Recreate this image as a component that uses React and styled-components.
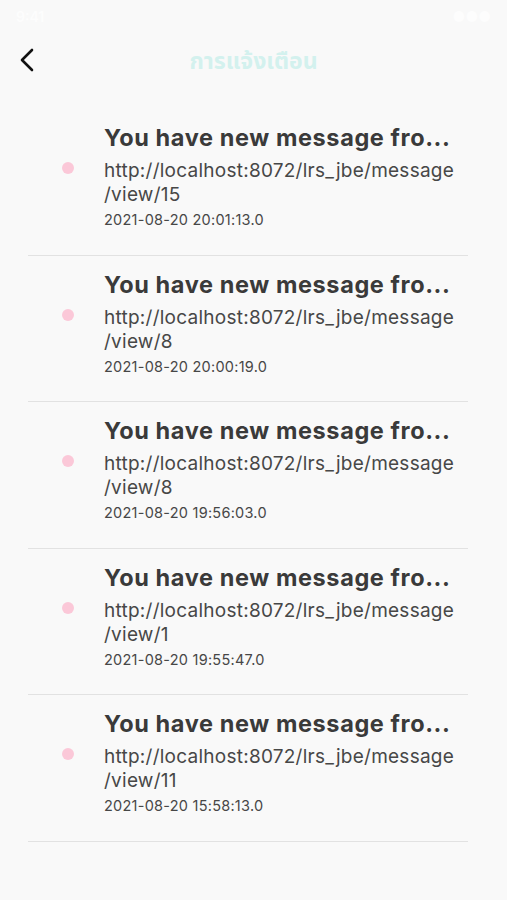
import React from "react";
import styled, { createGlobalStyle } from "styled-components";

const Global = createGlobalStyle`
  html, body { margin: 0; padding: 0; background: #f9f9f9; }
  body { font-family: Inter, "Liberation Sans", Arial, sans-serif; }
`;

const Screen = styled.div`
  width: 507px;
  min-height: 900px;
  background: #f9f9f9;
  display: flex;
  flex-direction: column;
`;

const StatusBar = styled.div`
  height: 44px;
  display: flex;
  align-items: center;
  justify-content: space-between;
  padding: 0 16px 12px;
  box-sizing: border-box;
  color: #fdfdfd;
  font-size: 14px;
  font-weight: 600;
`;

const NavBar = styled.div`
  height: 65px;
  display: grid;
  grid-template-columns: 60px 1fr 60px;
  grid-template-rows: 32px;
  align-items: center;
  box-sizing: border-box;
`;

const BackButton = styled.button`
  border: 0;
  background: transparent;
  padding: 0 0 0 19px;
  display: flex;
  align-items: center;
  cursor: pointer;
`;

const NavTitle = styled.h1`
  margin: 0;
  text-align: center;
  font-family: "Noto Sans Thai", "Noto Sans", "DejaVu Sans", sans-serif;
  font-size: 23px;
  line-height: 32px;
  font-weight: 700;
  color: #d3f1ee;
  padding-top: 4px;
`;

const List = styled.ul`
  list-style: none;
  margin: 0 39px 0 28px;
  padding: 0;
`;

const Item = styled.li`
  display: flex;
  align-items: flex-start;
  padding: 15px 0 24.5px 34px;
  border-bottom: 1px solid #e2e2e2;
`;

const Dot = styled.span`
  flex: none;
  width: 12px;
  height: 12px;
  border-radius: 50%;
  background: ${(p) => (p.$unread ? "#fbc8d8" : "transparent")};
  margin-top: 38px;
  margin-right: 30px;
`;

const Body = styled.div`
  flex: 1;
  min-width: 0;
  display: flex;
  flex-direction: column;
`;

const Title = styled.div`
  font-size: 23.5px;
  line-height: 28px;
  letter-spacing: 0.6px;
  font-weight: 700;
  color: #3a3a3a;
  white-space: nowrap;
  overflow: visible;
  margin-bottom: 7px;
`;

const Link = styled.div`
  font-size: 19px;
  line-height: 24px;
  letter-spacing: 0.25px;
  color: #474747;
`;

const LinkLine = styled.span`
  display: block;
  white-space: nowrap;
`;

const Date = styled.div`
  margin-top: 3px;
  font-size: 14.5px;
  line-height: 20px;
  letter-spacing: 0.25px;
  color: #474747;
`;

const items = [
  { id: 15, date: "2021-08-20 20:01:13.0" },
  { id: 8, date: "2021-08-20 20:00:19.0" },
  { id: 8, date: "2021-08-20 19:56:03.0" },
  { id: 1, date: "2021-08-20 19:55:47.0" },
  { id: 11, date: "2021-08-20 15:58:13.0" },
];

export default function App() {
  return (
    <Screen>
      <Global />
      <StatusBar>
        <span>9:41</span>
        <span>●●●</span>
      </StatusBar>
      <NavBar>
        <BackButton aria-label="back">
          <svg width="16" height="24" viewBox="0 0 16 24" fill="none">
            <path d="M13 2 L3 12 L13 22" stroke="#111" strokeWidth="2.6" strokeLinecap="round" strokeLinejoin="round" />
          </svg>
        </BackButton>
        <NavTitle>การแจ้งเตือน</NavTitle>
        <span />
      </NavBar>
      <List>
        {items.map((it, i) => (
          <Item key={i}>
            <Dot $unread />
            <Body>
              <Title>You have new message fro...</Title>
              <Link>
                <LinkLine>http://localhost:8072/lrs_jbe/message</LinkLine>
                <LinkLine>/view/{it.id}</LinkLine>
              </Link>
              <Date>{it.date}</Date>
            </Body>
          </Item>
        ))}
      </List>
    </Screen>
  );
}
